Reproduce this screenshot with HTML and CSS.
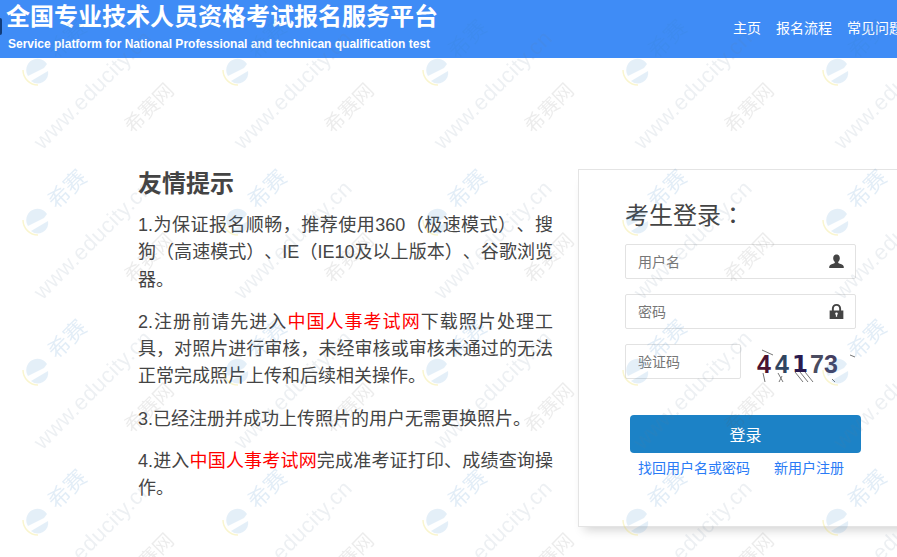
FILE: index.html
```html
<!DOCTYPE html>
<html lang="zh-CN">

<head>
  <meta charset="UTF-8">
  <meta name="viewport" content="width=device-width, initial-scale=1.0">
  <title>全国专业技术人员资格考试报名服务平台</title>
  <link rel="stylesheet" href="styles.css">
</head>

<body>
  <header class="header">
    <span class="logo-edge"></span>
    <div class="brand">
      <h1>全国专业技术人员资格考试报名服务平台</h1>
      <p>Service platform for National Professional and technican qualification test</p>
    </div>
    <nav class="nav">
      <a href="#">主页</a>
      <a href="#">报名流程</a>
      <a href="#">常见问题</a>
    </nav>
  </header>

  <main class="main">
    <section class="notice">
      <h2>友情提示</h2>
      <p>1.为保证报名顺畅，推荐使用360（极速模式）、搜狗（高速模式）、IE（IE10及以上版本）、谷歌浏览器。</p>
      <p>2.注册前请先进入<a href="#">中国人事考试网</a>下载照片处理工具，对照片进行审核，未经审核或审核未通过的无法正常完成照片上传和后续相关操作。</p>
      <p>3.已经注册并成功上传照片的用户无需更换照片。</p>
      <p>4.进入<a href="#">中国人事考试网</a>完成准考证打印、成绩查询操作。</p>
    </section>

    <section class="login">
      <h3>考生登录<span class="colon" lang="zh-TW">：</span></h3>
      <form>
        <div class="field">
          <input type="text" placeholder="用户名">
          <svg class="field-icon" viewBox="0 0 14 14">
            <path d="M7 0.5c-2 0-3.1 1.5-3.1 3.400 0 1.400 0.600 2.700 1.500 3.400 0.200 0.500 0.100 1.100-0.400 1.400-1.300 0.800-4.100 1-4.600 2.600-0.200 0.700-0.200 1.400-0.200 1.700h13.600c0-0.300 0-1-0.200-1.700-0.500-1.600-3.300-1.800-4.600-2.600-0.500-0.300-0.600-0.900-0.400-1.400 0.900-0.700 1.500-2 1.500-3.400 0-1.900-1.100-3.400-3.100-3.400z" />
          </svg>
        </div>
        <div class="field">
          <input type="password" placeholder="密码">
          <svg class="field-icon" viewBox="0 0 14 14">
            <path fill-rule="evenodd" d="M7 0c-2.500 0-4.300 1.800-4.300 4.300V6H0.600v8h12.800V6h-2.100V4.300C11.300 1.800 9.500 0 7 0zM7 1.700c1.500 0 2.500 1 2.500 2.600V6h-5V4.300c0-1.600 1-2.600 2.500-2.600zM7 8c0.700 0 1.200 0.500 1.200 1.100 0 0.500-0.200 0.800-0.600 1V12H6.400v-1.900c-0.400-0.200-0.600-0.500-0.600-1C5.800 8.500 6.300 8 7 8z" />
          </svg>
        </div>
        <div class="captcha-row">
          <div class="field field-short">
            <input type="text" placeholder="验证码">
          </div>
          <svg class="captcha" viewBox="0 0 103 35">
            <g class="captcha-noise">
              <path d="M7 2 L18 7 M8 25 L10 34 M23 25 L28 34 M27 28 L24 34 M40 24 L48 34 M45 24 L53 34 M50 24 L58 34 M77 31 L80 34 M95 7 L100 9" />
            </g>
            <text x="2" y="25" fill="#4b1230">4</text>
            <text x="20" y="25" fill="#2f4560">4</text>
            <text class="captcha-one" x="37" y="24" fill="#2a1a4e">1</text>
            <text x="55" y="25" fill="#4a4c60">7</text>
            <text x="69" y="25" fill="#453f60">3</text>
          </svg>
        </div>
        <button type="button" class="login-btn">登录</button>
        <div class="login-links">
          <a href="#">找回用户名或密码</a>
          <a href="#">新用户注册</a>
        </div>
      </form>
    </section>
  </main>

  <!-- 水印 -->
  <svg class="watermark" aria-hidden="true">
    <defs>
      <pattern id="wm" patternUnits="userSpaceOnUse" width="200" height="150">
        <path class="wm-e" d="M28 76 A10.500 10.500 0 0 1 47 64 L44 68 Z" />
        <path class="wm-e" d="M31 81 L48 71 A10.500 10.500 0 0 1 31 81 Z" />
        <path class="wm-arc" d="M23 70 A15 15 0 0 0 38 85" />
        <text class="wm-logo" x="67" y="47" text-anchor="middle" transform="rotate(-45 67 39)">希赛</text>
        <text class="wm-site" x="93" y="97" text-anchor="middle" transform="rotate(-45 93 90)">www.educity.cn</text>
        <text class="wm-name" x="149" y="115" text-anchor="middle" transform="rotate(-45 149 108)">希赛网</text>
      </pattern>
    </defs>
    <rect width="100%" height="100%" fill="url(#wm)" />
  </svg>
</body>

</html>
```

FILE: styles.css
```css
html,
body {
  height: 100%;
}

body {
  position: relative;
  margin: 0;
  overflow: hidden;
  background-color: #fff;
  color: #444;
  font-family: "Liberation Sans", "Noto Sans CJK SC", sans-serif;
  text-spacing-trim: space-all;
}

a {
  text-decoration: none;
}

/* 顶部 */
.header {
  display: flex;
  height: 58px;
  background-color: #3f8cf6;
  color: #fff;
}

.logo-edge {
  flex: 0 0 2px;
  height: 17px;
  margin: 18px 4px 0 0;
  background-color: #123c78;
  border-radius: 0 2px 2px 0;
}

.brand {
  flex: 0 0 727px;
}

.brand h1 {
  margin: 1px 0 0;
  font-size: 24px;
  line-height: 32px;
  font-weight: 700;
}

.brand p {
  margin: 3px 0 0 2px;
  font-size: 12px;
  line-height: 16px;
  font-weight: 700;
}

.nav {
  display: flex;
  flex-shrink: 0;
  gap: 15px;
  padding-top: 18px;
  font-size: 14px;
  line-height: 20px;
  white-space: nowrap;
}

.nav a {
  color: #fff;
}

/* 主体 */
.main {
  display: flex;
  align-items: flex-start;
  padding: 111px 0 0 138px;
}

.notice {
  flex: 0 0 415px;
  margin-right: 25px;
}

.notice h2 {
  margin: 1px 0 14px;
  font-size: 24px;
  line-height: 28px;
  font-weight: 700;
}

.notice p {
  margin: 0 0 15px;
  font-size: 18px;
  line-height: 27.3px;
  text-align: justify;
}

.notice a {
  color: #f00;
}

/* 登录框 */
.login {
  flex-shrink: 0;
  box-sizing: border-box;
  width: 340px;
  height: 358px;
  padding: 26px 0 0 46px;
  background-color: #fff;
  border: 1px solid #e4e4e4;
  box-shadow: 0 9px 10px -6px rgba(0, 0, 0, 0.18);
}

.login h3 {
  margin: 0 0 10px;
  font-size: 24px;
  line-height: 36px;
  font-weight: 400;
}

.colon {
  font-family: "Noto Sans CJK TC", sans-serif;
}

.field {
  display: flex;
  align-items: center;
  box-sizing: border-box;
  width: 231px;
  height: 35px;
  margin-bottom: 15px;
  padding: 0 11px 0 12px;
  border: 1px solid #e2e2e2;
  border-radius: 2px;
}

.field input {
  flex: 1;
  min-width: 0;
  padding: 0;
  border: none;
  outline: none;
  background: transparent;
  font-family: inherit;
  font-size: 14px;
}

.field input::placeholder {
  color: #777;
}

.field-icon {
  width: 15px;
  height: 15px;
  fill: #444;
}

.field-short {
  width: 116px;
  margin-bottom: 0;
}

.captcha-row {
  display: flex;
  align-items: flex-start;
  gap: 14px;
}

.captcha {
  width: 103px;
  height: 35px;
  margin-top: 4px;
}

.captcha text {
  font-family: "Liberation Sans", sans-serif;
  font-size: 25px;
  font-weight: 700;
}

.captcha .captcha-one {
  font-family: "DejaVu Sans", sans-serif;
  font-size: 23px;
}

.captcha-noise path {
  fill: none;
  stroke: #777;
  stroke-width: 1;
}

.login-btn {
  display: block;
  width: 231px;
  height: 38px;
  margin: 32px 0 0 5px;
  padding: 0;
  background-color: #1c82c6;
  color: #fff;
  border: none;
  border-radius: 4px;
  font-family: inherit;
  font-size: 16px;
  cursor: pointer;
}

.login-links {
  display: flex;
  gap: 24px;
  margin: 5px 0 0 13px;
  font-size: 14px;
  line-height: 20px;
}

.login-links a {
  color: #2a7bf6;
}

/* 水印 */
.watermark {
  position: absolute;
  top: 0;
  left: 0;
  width: 100%;
  height: 100%;
  pointer-events: none;
}

.wm-e {
  fill: #2f80c8;
  fill-opacity: 0.13;
}

.wm-arc {
  fill: none;
  stroke: #e8d840;
  stroke-opacity: 0.25;
  stroke-width: 1.5;
}

.wm-logo {
  font-family: "Noto Sans CJK SC", sans-serif;
  font-size: 22px;
  fill: #2f80c8;
  fill-opacity: 0.14;
}

.wm-site {
  font-family: "Liberation Sans", sans-serif;
  font-size: 22px;
  letter-spacing: 0.5px;
  fill: #5a7a90;
  fill-opacity: 0.11;
}

.wm-name {
  font-family: "Noto Sans CJK SC", sans-serif;
  font-size: 20px;
  fill: #555;
  fill-opacity: 0.11;
}
```
